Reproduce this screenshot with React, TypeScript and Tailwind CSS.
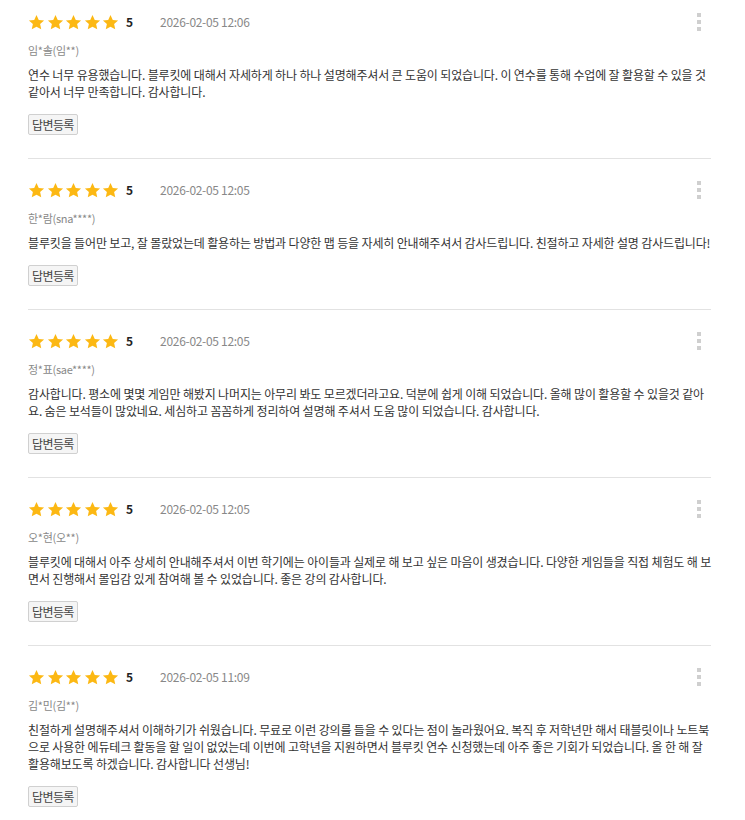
import React from 'react';

const reviews = [
  {
    date: '2026-02-05 12:06',
    name: '임*솔(임**)',
    body: '연수 너무 유용했습니다. 블루킷에 대해서 자세하게 하나 하나 설명해주셔서 큰 도움이 되었습니다. 이 연수를 통해 수업에 잘 활용할 수 있을 것 같아서 너무 만족합니다. 감사합니다.',
  },
  {
    date: '2026-02-05 12:05',
    name: '한*람(sna****)',
    body: '블루킷을 들어만 보고, 잘 몰랐었는데 활용하는 방법과 다양한 맵 등을 자세히 안내해주셔서 감사드립니다. 친절하고 자세한 설명 감사드립니다!',
  },
  {
    date: '2026-02-05 12:05',
    name: '정*표(sae****)',
    body: '감사합니다. 평소에 몇몇 게임만 해봤지 나머지는 아무리 봐도 모르겠더라고요. 덕분에 쉽게 이해 되었습니다. 올해 많이 활용할 수 있을것 같아요. 숨은 보석들이 많았네요. 세심하고 꼼꼼하게 정리하여 설명해 주셔서 도움 많이 되었습니다. 감사합니다.',
  },
  {
    date: '2026-02-05 12:05',
    name: '오*현(오**)',
    body: '블루킷에 대해서 아주 상세히 안내해주셔서 이번 학기에는 아이들과 실제로 해 보고 싶은 마음이 생겼습니다. 다양한 게임들을 직접 체험도 해 보면서 진행해서 몰입감 있게 참여해 볼 수 있었습니다. 좋은 강의 감사합니다.',
  },
  {
    date: '2026-02-05 11:09',
    name: '김*민(김**)',
    body: '친절하게 설명해주셔서 이해하기가 쉬웠습니다. 무료로 이런 강의를 들을 수 있다는 점이 놀라웠어요. 복직 후 저학년만 해서 태블릿이나 노트북으로 사용한 에듀테크 활동을 할 일이 없었는데 이번에 고학년을 지원하면서 블루킷 연수 신청했는데 아주 좋은 기회가 되었습니다. 올 한 해 잘 활용해보도록 하겠습니다. 감사합니다 선생님!',
  },
];

function Star() {
  return (
    <svg width="17" height="17" viewBox="0 0 24 24" className="shrink-0">
      <path
        d="M12 1.4l3.2 6.9 7.5.8-5.6 5.1 1.6 7.5L12 18l-6.7 3.7 1.6-7.5-5.6-5.1 7.5-.8z"
        fill="#fcb813"
      />
    </svg>
  );
}

export default function App() {
  return (
    <div className="w-[745px] bg-white pl-[28px] pr-[34px] font-['Noto_Sans_CJK_KR',sans-serif] text-[#333]">
      {reviews.map((r, idx) => (
        <div
          key={idx}
          className={
            idx === 0
              ? 'pt-[13px] pb-[23px] border-b border-[#e2e2e2]'
              : idx === reviews.length - 1
              ? 'pt-[22px] pb-[23px]'
              : 'pt-[22px] pb-[23px] border-b border-[#e2e2e2]'
          }
        >
          <div className="flex items-center h-[18px]">
            <div className="flex gap-[1.5px]">
              <Star />
              <Star />
              <Star />
              <Star />
              <Star />
            </div>
            <span className="ml-[7px] text-[12px] font-bold text-[#222] leading-none">5</span>
            <span className="ml-[27px] text-[12px] text-[#888] leading-none tracking-[-0.3px]">{r.date}</span>
            <div className="ml-auto mr-[10px] flex flex-col gap-[3px]">
              <span className="block w-[4px] h-[4px] bg-[#cfcfcf]" />
              <span className="block w-[4px] h-[4px] bg-[#cfcfcf]" />
              <span className="block w-[4px] h-[4px] bg-[#cfcfcf]" />
            </div>
          </div>
          <div className="mt-[11px] text-[11px] leading-[16px] text-[#888] tracking-[-0.3px]">{r.name}</div>
          <p className="mt-[8px] mr-[-2px] text-[12px] leading-[17px] tracking-[-0.15px] text-[#333]">{r.body}</p>
          <button className="mt-[14px] h-[21px] px-[3px] border border-[#d0d0d0] rounded-[2px] bg-[#f5f5f5] text-[12px] leading-none text-[#444] tracking-[-0.6px]">
            답변등록
          </button>
        </div>
      ))}
    </div>
  );
}
